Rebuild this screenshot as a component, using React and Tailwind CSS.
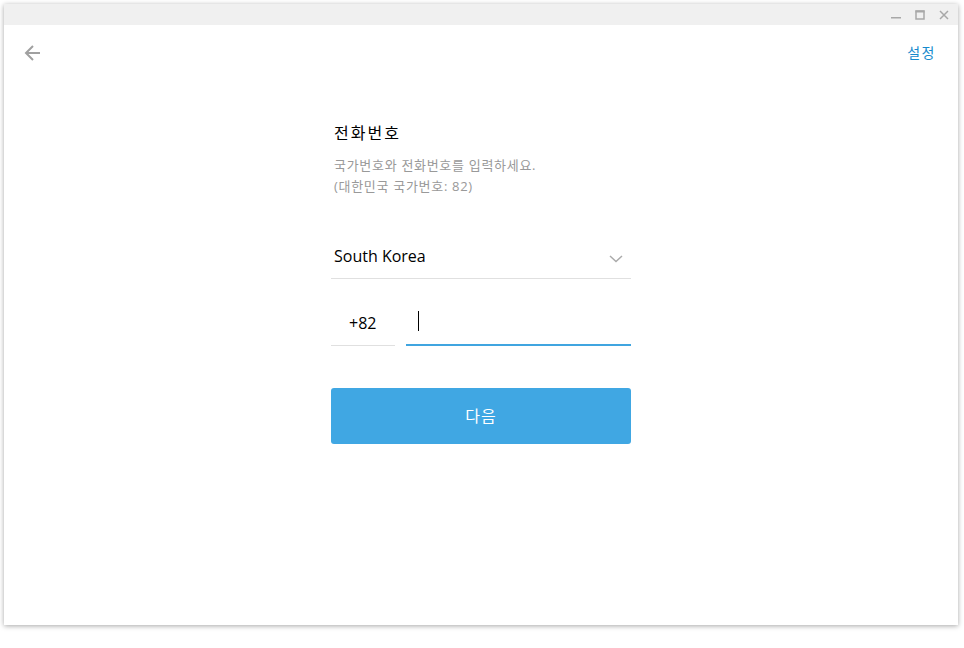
import React from "react";

export default function App() {
  const font = { fontFamily: '"Open Sans", "Noto Sans CJK KR", sans-serif' };
  return (
    <div className="w-[964px] h-[648px] bg-white pl-[4px] pt-[4px] overflow-hidden" style={font}>
      <div className="w-[954px] h-[621px] bg-white flex flex-col shadow-[0_1px_5px_rgba(0,0,0,0.35)]">
        {/* title bar */}
        <div className="h-[21px] bg-[#f0f0f0] flex items-center justify-end pr-[2px]">
          <div className="w-[24px] h-[21px] flex items-center justify-center">
            <svg width="10" height="10" viewBox="0 0 10 10">
              <rect x="0" y="7" width="10" height="1.5" fill="#a8a8a8" />
            </svg>
          </div>
          <div className="w-[24px] h-[21px] flex items-center justify-center">
            <svg width="10" height="10" viewBox="0 0 10 10">
              <rect x="1" y="1" width="8" height="8" fill="none" stroke="#a8a8a8" strokeWidth="1.5" />
              <rect x="0.5" y="0.5" width="9" height="2" fill="#a8a8a8" />
            </svg>
          </div>
          <div className="w-[24px] h-[21px] flex items-center justify-center">
            <svg width="10" height="10" viewBox="0 0 10 10">
              <path d="M1 1 L9 9 M9 1 L1 9" stroke="#a8a8a8" strokeWidth="1.5" fill="none" />
            </svg>
          </div>
        </div>

        {/* header */}
        <div className="h-[56px] flex items-center justify-between pl-[20px] pr-[22px]">
          <svg width="18" height="18" viewBox="0 0 18 18">
            <path d="M16 9 H2 M9 2 L2 9 L9 16" stroke="#a0a0a0" strokeWidth="2" fill="none" />
          </svg>
          <span className="text-[14px] leading-[20px] text-[#168acd] tracking-[1.5px]">설정</span>
        </div>

        {/* form */}
        <div className="w-[300px] mx-auto mt-[40px] flex flex-col">
          <div className="pl-[3px] text-[16px] leading-[24px] text-[#000] tracking-[2px]">전화번호</div>
          <div className="pl-[3px] mt-[10px] text-[13px] leading-[21px] text-[#999999] tracking-[0.7px]">
            <div>국가번호와 전화번호를 입력하세요.</div>
            <div>(대한민국 국가번호: 82)</div>
          </div>

          <div className="mt-[47px] h-[35px] border-b border-[#e0e0e0] flex items-start justify-between pl-[3px] pr-[8px]">
            <span className="text-[16px] leading-[24px] text-[#000]">South Korea</span>
            <svg width="14" height="10" viewBox="0 0 14 10" className="mt-[10px]">
              <path d="M1 2 L7 7.5 L13 2" stroke="#aaaaaa" strokeWidth="1.5" fill="none" />
            </svg>
          </div>

          <div className="mt-[21px] flex items-end gap-[11px]">
            <div className="w-[64px] h-[46px] border-b border-[#e0e0e0] flex items-center pl-[18px] text-[16px] text-[#000]">
              +82
            </div>
            <div className="flex-1 h-[46px] border-b-2 border-[#40a5e0] flex items-center pl-[12px]">
              <div className="w-[1px] h-[20px] bg-black mb-[2px]"></div>
            </div>
          </div>

          <button className="mt-[42px] h-[56px] w-full rounded-[3px] bg-[#40a7e3] text-white text-[16px] tracking-[1px] flex items-center justify-center">
            다음
          </button>
        </div>
      </div>
    </div>
  );
}
